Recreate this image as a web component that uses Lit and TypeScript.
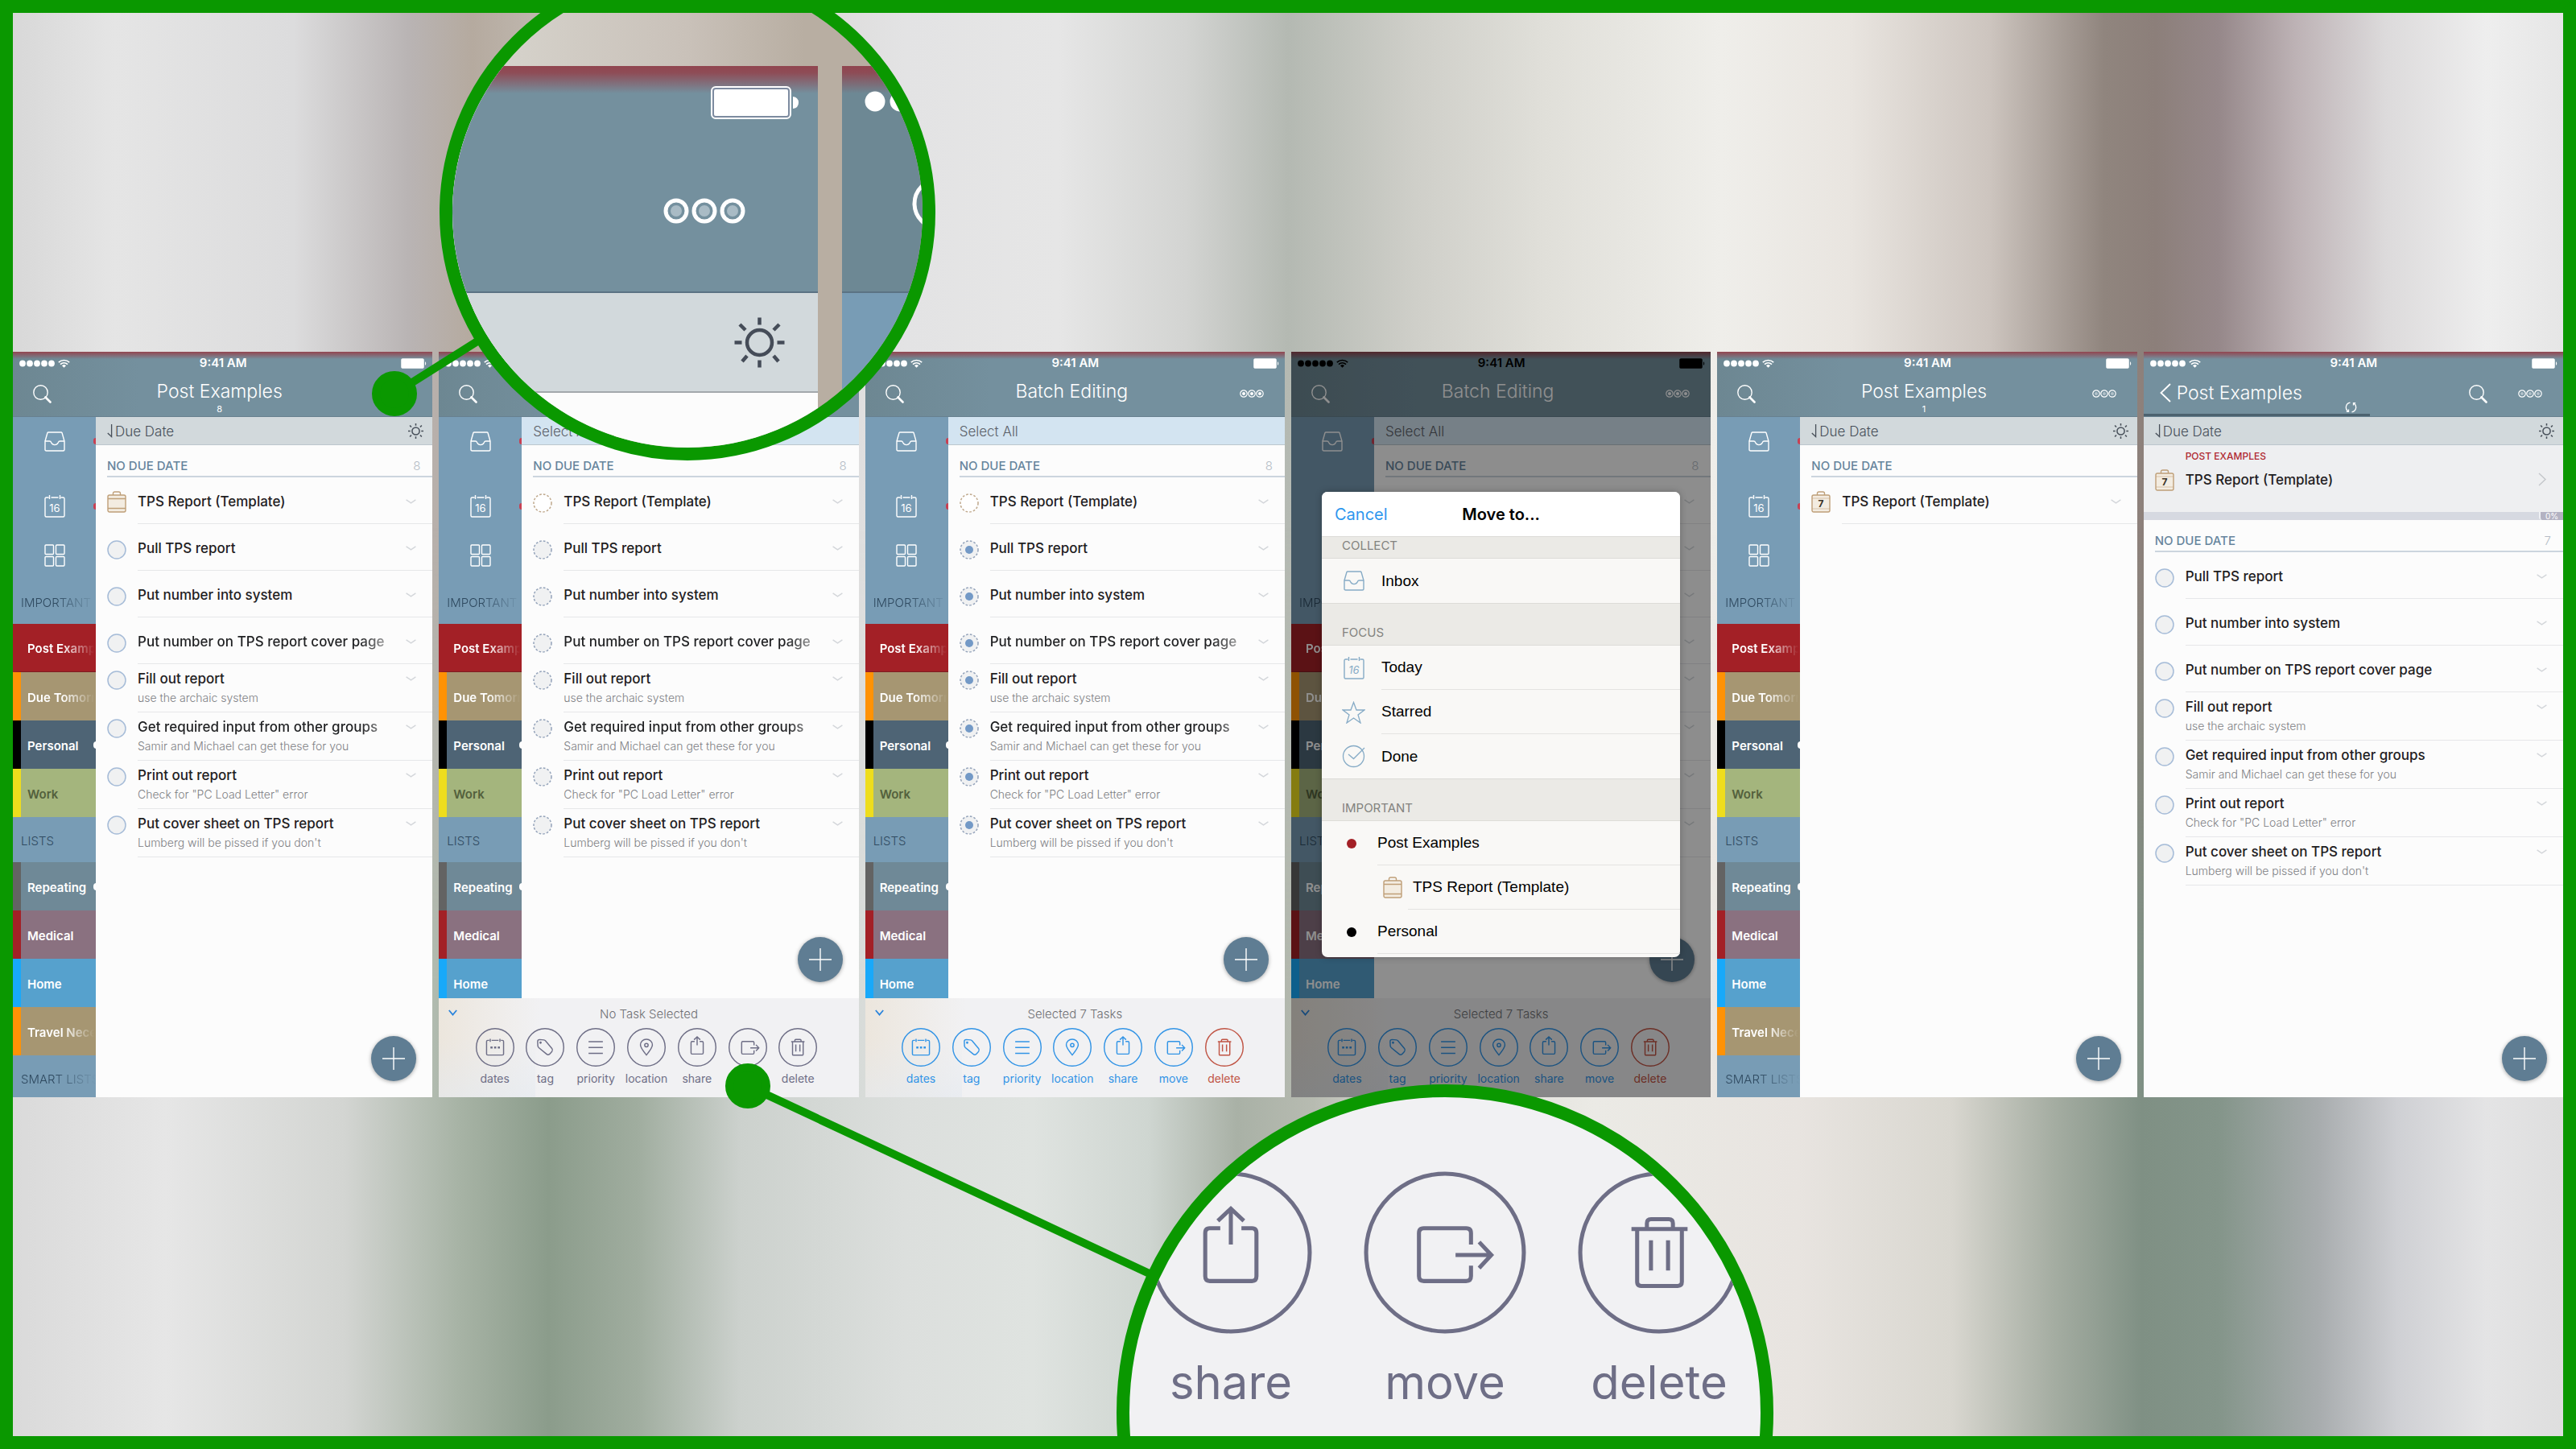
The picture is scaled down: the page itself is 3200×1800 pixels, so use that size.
import { LitElement, html, svg, css, nothing } from "lit";
import { customElement, property } from "lit/decorators.js";
import { classMap } from "lit/directives/class-map.js";

const sans = css`Inter, "Liberation Sans", sans-serif`;

/* ---------- icons ---------- */

const searchIcon = html`<svg class="ico" width="23" height="23" viewBox="0 0 23 23" fill="none" stroke="currentColor">
  <circle cx="9.5" cy="9.5" r="8.7" stroke-width="1.4" />
  <path d="M15.5 15.5 21.5 21.5" stroke-width="2.6" stroke-linecap="round" />
</svg>`;

const wifiIcon = html`<svg width="15" height="11" viewBox="0 0 15 11" fill="none" stroke="currentColor" stroke-width="1.7">
  <path d="M.8 4.2a9.6 9.6 0 0 1 13.4 0M3 6.6a6.4 6.4 0 0 1 9 0" />
  <path d="M7.5 10.8 5 8.3a3.6 3.6 0 0 1 5 0z" fill="currentColor" stroke="none" />
</svg>`;

const batteryIcon = html`<svg width="32" height="13" viewBox="0 0 32 13">
  <rect x=".5" y=".5" width="28" height="12" rx="1.6" fill="currentColor" stroke="currentColor" stroke-opacity=".5" />
  <path d="M30 4.2c1.6.6 1.6 4 0 4.6z" fill="currentColor" />
</svg>`;

const moreIcon = (on: boolean) => html`<svg class="ico" width="30" height="12" viewBox="0 0 30 12" fill="none" stroke="currentColor">
  ${[5, 15, 25].map(
    (x) => svg`<circle cx=${x} cy="6" r="4.2" stroke-width="1.2" />
      <circle cx=${x} cy="6" r="2" fill="currentColor" fill-opacity=${on ? 1 : 0.45} stroke="none" />`
  )}
</svg>`;

const sunIcon = html`<svg width="19" height="19" viewBox="0 0 62 62" fill="none" stroke="currentColor" stroke-width="5">
  <circle cx="31" cy="31" r="15" />
  <path d="M31 0v9M31 53v9M0 31h9M53 31h9M7 8l6 7M49 47l6 7M55 8l-6 7M13 47l-6 7" />
</svg>`;

const sortArrow = html`<svg width="7" height="17" viewBox="0 0 7 17" fill="none" stroke="currentColor" stroke-width="1.3">
  <path d="M5.6 0v15.5L.8 11" />
</svg>`;

const inboxIcon = html`<svg width="26" height="25" viewBox="0 0 26 25" fill="none" stroke="currentColor" stroke-width="1.4">
  <path d="M1 12 4 1.6Q4.300 1 5 1H21Q21.700 1 22 1.600L25 12V22.500Q25 24 23.500 24H2.500Q1 24 1 22.500ZM1 12H6.500Q8 12 8.700 13.800Q10 16.600 13 16.600T17.300 13.800Q18 12 19.500 12H25" />
</svg>`;

const calendarIcon = html`<svg width="26" height="28" viewBox="0 0 26 28" fill="none" stroke="currentColor" stroke-width="1.400">
  <path d="M5.500 3H2.500Q1 3 1 4.500V25.500Q1 27 2.500 27H23.500Q25 27 25 25.500V4.500Q25 3 23.500 3H20.500M8.500 3H17.500M6.500 0V5M19.500 0V5" />
  <text x="13" y="20.500" text-anchor="middle" font-size="13" fill="currentColor" stroke="none" font-family="Inter, sans-serif">16</text>
</svg>`;

const gridIcon = html`<svg width="26" height="28" viewBox="0 0 26 28" fill="none" stroke="currentColor" stroke-width="1.400">
  <rect x="1" y="1" width="10.500" height="11.500" rx="1" /><rect x="14.500" y="1" width="10.500" height="11.500" rx="1" />
  <rect x="1" y="15.500" width="10.500" height="11.500" rx="1" /><rect x="14.500" y="15.500" width="10.500" height="11.500" rx="1" />
</svg>`;

const starIcon = html`<svg width="29" height="28" viewBox="0 0 29 28" fill="none" stroke="currentColor" stroke-width="1.300">
  <path d="M14.500 1.500 18 11H27.800L20 17 23 27 14.500 21 6 27 9 17 1.200 11H11Z" />
</svg>`;

const doneIcon = html`<svg width="29" height="29" viewBox="0 0 29 29" fill="none" stroke="currentColor" stroke-width="1.300">
  <circle cx="14.500" cy="14.500" r="13" /><path d="M8 12 14.500 17.500 28 4" />
</svg>`;

const briefcase = (count?: number) => html`<svg width="24" height="27" viewBox="0 0 24 27" fill="none" stroke="#bf9f78" stroke-width="1.400">
  <path d="M7.500 5V3Q7.500 1 9.500 1H14.500Q16.500 1 16.500 3V5" />
  <rect x="1" y="5" width="22" height="21" rx="2" fill="#f3ece1" />
  ${count === undefined
    ? svg`<path d="M1 9.500H23M1 21.500H23" />`
    : svg`<path d="M1 9H23M1 22H23" stroke-opacity=".35" />
      <text x="12" y="19.500" text-anchor="middle" font-size="12" font-weight="700" fill="#3a3428" stroke="none" font-family="Inter, sans-serif">${count}</text>`}
</svg>`;

const downChevron = html`<svg width="13" height="6" viewBox="0 0 13 6" fill="none" stroke="currentColor" stroke-width="1.400">
  <path d="M.6.8 6.500 4.800 12.400.8" />
</svg>`;

const gear = html`<svg width="12" height="14" viewBox="0 0 12 14" fill="none" stroke="#a5620d">
  <circle cx="5" cy="7" r="3.600" stroke-width="2" />
  <path d="M5 1v12M0 7h11M1 3l8 8M1 11l8-8" stroke-width="1.500" stroke-dasharray="2 20" />
  <path d="M9 7h2M8 3.500l1.500-1M8 10.500l1.500 1" stroke-width="2" />
</svg>`;

/* Tool glyphs, drawn on a 200-unit circle. */
const toolGlyphs: Record<string, unknown> = {
  dates: svg`<path d="M70 64H62Q56 64 56 70V134Q56 140 62 140H138Q144 140 144 134V70Q144 64 138 64H130M82 64H118M75 56V72M125 56V72" />
    <path d="M76 101h11M95 101h11M114 101h11" stroke-width="10" />`,
  tag: svg`<path d="M62 70Q62 60 72 60L95 62Q99 63 102 66L136 106Q142 114 136 122L124 135Q116 142 108 135L68 102Q64 98 63 93Z" />
    <circle cx="77" cy="76" r="3" />`,
  priority: svg`<path d="M63 71H137M63 101H137M63 131H137" />`,
  location: svg`<path d="M100 140Q69 103 69 88A31 30 0 0 1 131 88Q131 103 100 140Z" /><circle cx="100" cy="89" r="9" />`,
  share: svg`<path d="M87 70H74Q68.500 70 68.500 76V129Q68.500 135 74 135H126Q131.500 135 131.500 129V76Q131.500 70 126 70H113M100 46V90M84 61 100 46 116 61" />`,
  move: svg`<path d="M132 90V76Q132 70 126 70H74Q68 70 68 76V129Q68 135 74 135H126Q132 135 132 129V116M113 103H157M142 87 157 103 142 119" />`,
  delete: svg`<path d="M66 71H135M73 71V136Q73 141 78 141H123Q128 141 128 136V71M85 71V64Q85 59 90 59H112Q117 59 117 64V71M90 85V122M111 85V122" />`,
};

const toolDisc = (name: string, size: number) => html`<svg width=${size} height=${size} viewBox="0 0 200 200" fill="none" stroke="currentColor" stroke-width=${size > 100 ? 5 : 6}>
  <circle cx="100" cy="100" r="97" />${toolGlyphs[name]}
</svg>`;

/* ---------- data ---------- */

interface Task {
  title: string;
  note?: string;
}

const tasks: Task[] = [
  { title: "Pull TPS report" },
  { title: "Put number into system" },
  { title: "Put number on TPS report cover page" },
  { title: "Fill out report", note: "use the archaic system" },
  { title: "Get required input from other groups", note: "Samir and Michael can get these for you" },
  { title: "Print out report", note: 'Check for "PC Load Letter" error' },
  { title: "Put cover sheet on TPS report", note: "Lumberg will be pissed if you don't" },
];

const important = [
  { name: "Post Examples", tone: "current" },
  { name: "Due Tomorrow", tone: "tan", gear: true },
  { name: "Personal", tone: "navy", dot: true },
  { name: "Work", tone: "green" },
];

const lists = [
  { name: "Repeating", tone: "grey", dot: true },
  { name: "Medical", tone: "wine" },
  { name: "Home", tone: "sky" },
  { name: "Travel Necessities", tone: "tan" },
];

const tools = ["dates", "tag", "priority", "location", "share", "move", "delete"];

/* ---------- shared styles ---------- */

const base = css`
  :host {
    font-family: ${sans};
  }
  * {
    box-sizing: border-box;
  }
  svg {
    display: block;
    flex: none;
  }
  button {
    font: inherit;
    color: inherit;
    background: none;
    border: 0;
    padding: 0;
    margin: 0;
  }
  a {
    color: inherit;
    text-decoration: none;
  }
  h2,
  h3,
  p {
    margin: 0;
    font-weight: 400;
  }
`;

/* ---------- sidebar ---------- */

@customElement("list-rail")
export class ListRail extends LitElement {
  @property({ type: Boolean }) short = false;

  static styles = [
    base,
    css`
      :host {
        display: block;
        overflow: hidden;
        background: #789cb5;
        color: #fff;
      }
      .nav {
        height: 257px;
        display: flex;
        flex-direction: column;
        align-items: center;
        padding-top: 18px;
      }
      .nav a {
        width: 100%;
        display: flex;
        justify-content: center;
        position: relative;
      }
      .nav .inbox {
        height: 79px;
      }
      .nav .today {
        height: 61px;
      }
      .badge::after {
        content: "";
        position: absolute;
        right: -3px;
        top: 8px;
        width: 6px;
        height: 8px;
        border-radius: 3px;
        background: #c84052;
      }
      .nav .today::after {
        top: 10px;
      }
      .nav p {
        margin-top: auto;
      }
      .label {
        width: 100%;
        height: 56px;
        padding: 0 10px;
        line-height: 60px;
        font-size: 15px;
        font-weight: 300;
        color: #2f4a60;
        overflow: hidden;
        white-space: nowrap;
        mask-image: linear-gradient(90deg, #000 50%, transparent 100%);
      }
      .label.short {
        mask-image: none;
      }
      .label.last {
        height: 52px;
      }
      .nav .label {
        height: 52px;
        line-height: 52px;
      }
      .item {
        display: flex;
        align-items: center;
        height: 60px;
        border-left: 10px solid;
        padding-left: 8px;
        font-size: 15px;
        font-weight: 600;
        white-space: nowrap;
        overflow: hidden;
        position: relative;
      }
      .item span {
        flex: 1;
        overflow: hidden;
        padding-top: 2px;
      }
      .fade {
        mask-image: linear-gradient(90deg, #000 50%, transparent 98%);
      }
      .gear {
        position: absolute;
        left: -12px;
        top: 24px;
      }
      .dot::after {
        content: "";
        position: absolute;
        right: -5px;
        top: 26px;
        width: 8px;
        height: 9px;
        border-radius: 4px;
        background: #fff;
      }
      .current {
        background: #a32026;
        border-color: #a32026;
        border-bottom: 1px solid #7d1c20;
      }
      .tan {
        background: #a69672;
        border-left-color: #ff9205;
      }
      .navy {
        background: #4e6475;
        border-left-color: #000;
      }
      .green {
        background: #a4b57d;
        border-left-color: #eedd1d;
        color: #53603c;
      }
      .grey {
        background: #6f8997;
        border-left-color: #636363;
      }
      .wine {
        background: #8a7180;
        border-left-color: #a32026;
      }
      .sky {
        background: #56a1cd;
        border-left-color: #18a9fa;
      }
    `,
  ];

  private item = (i: { name: string; tone: string; gear?: boolean; dot?: boolean }) => html`
    <a href="#list" class=${classMap({ item: true, [i.tone]: true, dot: !!i.dot })}>
      ${i.gear ? html`<i class="gear">${gear}</i>` : nothing}
      <span class=${classMap({ fade: i.name.length > 10 })}>${i.name}</span>
    </a>
  `;

  render() {
    return html`
      <div class="nav">
        <a class="inbox badge" href="#inbox" aria-label="Inbox">${inboxIcon}</a>
        <a class="today badge" href="#today" aria-label="Today">${calendarIcon}</a>
        <a href="#all" aria-label="All lists">${gridIcon}</a>
        <p class="label">IMPORTANT</p>
      </div>
      ${important.map(this.item)}
      <p class="label short">LISTS</p>
      ${(this.short ? lists.slice(0, 3) : lists).map(this.item)}
      ${this.short ? nothing : html`<p class="label last">SMART LISTS</p>`}
    `;
  }
}

/* ---------- batch toolbar ---------- */

@customElement("batch-toolbar")
export class BatchToolbar extends LitElement {
  @property() heading = "";
  @property({ type: Boolean }) active = false;

  static styles = [
    base,
    css`
      :host {
        display: block;
        height: 123px;
        padding-top: 9px;
        background: linear-gradient(180deg, #f1f1f300 40%, #e3e9f088 100%) 0 0 / 120px 100% no-repeat,
          linear-gradient(90deg, #ece6dd, #f1f1f3 24%);
        color: #6e6e86;
        position: relative;
      }
      .fold {
        position: absolute;
        left: 12px;
        top: 14px;
        color: #2a84dc;
      }
      .heading {
        text-align: center;
        font-size: 15px;
        line-height: 22px;
        font-weight: 300;
        color: #6f7074;
      }
      .tools {
        display: grid;
        grid-template-columns: repeat(7, 1fr);
        padding: 6px 44px 0 38px;
      }
      .tool {
        display: flex;
        flex-direction: column;
        align-items: center;
        gap: 6px;
        font-size: 14px;
        line-height: 18px;
      }
      .active .tool {
        color: #3294e6;
      }
      .active .delete {
        color: #c05444;
      }
    `,
  ];

  render() {
    return html`
      <button class="fold" aria-label="Hide tools">
        <svg width="11" height="8" viewBox="0 0 11 8" fill="none" stroke="currentColor" stroke-width="1.800"><path d="M.8 1 5.500 6.500 10.200 1" /></svg>
      </button>
      <p class="heading">${this.heading}</p>
      <div class=${classMap({ tools: true, active: this.active })}>
        ${tools.map((t) => html`<button class="tool ${t}">${toolDisc(t, 48)}<span>${t}</span></button>`)}
      </div>
    `;
  }
}

/* ---------- move dialog ---------- */

@customElement("move-dialog")
export class MoveDialog extends LitElement {
  static styles = [
    base,
    css`
      :host {
        display: block;
        height: 578px;
        border-radius: 7px;
        overflow: hidden;
        background: #f9f8f6;
        box-shadow: 0 0 8px rgba(0, 0, 0, 0.25);
      }
      .head {
        display: grid;
        grid-template-columns: 1fr auto 1fr;
        align-items: center;
        height: 55px;
        padding: 0 16px;
        background: #fff;
        font-size: 20px;
      }
      .cancel {
        justify-self: start;
        color: #2c96ee;
      }
      .head h2 {
        font-size: 20px;
        font-weight: 600;
        color: #000;
      }
      .group {
        height: 53px;
        display: flex;
        align-items: flex-end;
        padding: 0 25px 6px;
        font-size: 15px;
        line-height: 18px;
        color: #83837f;
        background: #ebeae6;
        border: solid #dddcd8;
        border-width: 1px 0;
      }
      .group.first {
        height: 28px;
      }
      .row {
        display: flex;
        width: 100%;
        height: 55px;
        align-items: stretch;
        text-align: left;
        font: 19px "Liberation Sans", sans-serif;
        color: #000;
      }
      .mark {
        width: 74px;
        display: flex;
        align-items: center;
        justify-content: center;
        padding-left: 6px;
        color: #86abc6;
      }
      .row span {
        flex: 1;
        display: flex;
        align-items: center;
        border-bottom: 1px solid #e4e3e1;
      }
      .row.end span {
        border: 0;
      }
      .dotted .mark {
        width: 69px;
      }
      .dot {
        width: 12px;
        height: 12px;
        border-radius: 50%;
        background: currentColor;
      }
      .red {
        color: #a32026;
      }
      .black {
        color: #000;
      }
      .nested .mark {
        width: 107px;
        justify-content: flex-end;
        padding-right: 7px;
      }
      .nested span {
        padding-left: 6px;
      }
    `,
  ];

  render() {
    return html`
      <div class="head">
        <button class="cancel">Cancel</button>
        <h2>Move to...</h2>
      </div>
      <h3 class="group first">COLLECT</h3>
      <button class="row end"><i class="mark">${inboxIcon}</i><span>Inbox</span></button>
      <h3 class="group">FOCUS</h3>
      <button class="row"><i class="mark">${calendarIcon}</i><span>Today</span></button>
      <button class="row"><i class="mark">${starIcon}</i><span>Starred</span></button>
      <button class="row end"><i class="mark">${doneIcon}</i><span>Done</span></button>
      <h3 class="group">IMPORTANT</h3>
      <button class="row dotted"><i class="mark"><b class="dot red"></b></i><span>Post Examples</span></button>
      <button class="row nested"><i class="mark">${briefcase()}</i><span>TPS Report (Template)</span></button>
      <button class="row dotted"><i class="mark"><b class="dot black"></b></i><span>Personal</span></button>
    `;
  }
}

/* ---------- phone screen ---------- */

type Mode = "list" | "batch" | "selected" | "moving" | "single" | "detail";

@customElement("phone-screen")
export class PhoneScreen extends LitElement {
  @property() mode: Mode = "list";

  static styles = [
    base,
    css`
      :host {
        display: flex;
        flex-direction: column;
        min-width: 0;
        position: relative;
        background: #fcfcfc;
        color: #1f2022;
      }
      .header {
        height: 81px;
        flex: none;
        color: #fff;
        background: linear-gradient(180deg, #93454f, #93454f00 9px), linear-gradient(90deg, #6d8792, #74909e 30%);
        border-bottom: 1px solid #67808f;
      }
      .detail .header {
        background: linear-gradient(180deg, #93454f, #93454f00 9px), #74909e;
      }
      .status {
        height: 28px;
        display: grid;
        grid-template-columns: 1fr auto 1fr;
        align-items: center;
        padding: 0 7px 0 8px;
        font-size: 15px;
        line-height: 28px;
        font-weight: 600;
        position: relative;
      }
      .moving .status {
        z-index: 3;
        color: #000;
      }
      .signal {
        display: flex;
        align-items: center;
        gap: 3px;
      }
      .battery {
        justify-self: end;
      }
      .bar {
        display: flex;
        align-items: flex-start;
        justify-content: space-between;
        padding: 7px 26px 0 25px;
      }
      .bar button {
        display: flex;
        align-items: center;
        height: 24px;
        margin-top: 5px;
      }
      .heading {
        flex: 1;
        text-align: center;
      }
      .heading h2 {
        font-size: 23px;
        line-height: 28px;
        font-weight: 300;
      }
      .heading p {
        font-size: 11px;
        line-height: 16px;
      }
      .wide {
        display: grid;
        grid-template-columns: 1fr auto 1fr;
        padding: 9px 26px 0 20px;
        height: 52px;
        background: linear-gradient(#4c626f, #4c626f) 0 100% / 54% 3px no-repeat;
      }
      .wide .back {
        gap: 7px;
        height: 28px;
        margin: 0;
        font-size: 23px;
        font-weight: 300;
      }
      .wide .sync {
        margin-top: 25px;
        height: 14px;
      }
      .wide .actions {
        display: flex;
        justify-content: flex-end;
        gap: 38px;
      }
      .wide .actions button {
        margin-top: 3px;
      }
      .body {
        display: flex;
        align-items: stretch;
      }
      .detail .body {
        flex: 1;
      }
      .batched .body {
        flex: 1 1 0;
        min-height: 0;
        overflow: hidden;
      }
      .screen {
        flex: 1;
        display: flex;
        flex-direction: column;
      }
      list-rail {
        width: 103px;
        flex: none;
      }
      .detail list-rail {
        display: none;
      }
      .pane {
        flex: 1;
        min-width: 0;
        position: relative;
      }
      .sort {
        display: flex;
        align-items: center;
        justify-content: space-between;
        height: 35px;
        padding: 1px 11px 0 14px;
        background: #d2d9dc;
        border-bottom: 1px solid #bcc6cd;
        color: #474f59;
        font-size: 17px;
        font-weight: 300;
      }
      .sort button {
        display: flex;
        align-items: center;
        gap: 3px;
      }
      .batched .sort {
        background: #d3e4f1;
        color: #5b6068;
      }
      .section {
        display: flex;
        justify-content: space-between;
        align-items: flex-end;
        height: 40px;
        margin-left: 14px;
        padding: 0 15px 2px 0;
        font-size: 15px;
        line-height: 20px;
        font-weight: 500;
        color: #67859d;
        border-bottom: 2px solid #ccd5de;
      }
      .section small {
        font-size: 15px;
        font-weight: 300;
        color: #b5bcc6;
      }
      .row {
        display: flex;
        height: 58px;
        padding-left: 14px;
      }
      .tick {
        display: grid;
        width: 24px;
        height: 24px;
        margin-top: 20px;
      }
      .tick > * {
        grid-area: 1 / 1;
        width: 24px;
        height: 24px;
        margin: 0;
      }
      .tick input {
        appearance: none;
        opacity: 0;
      }
      .case {
        width: 24px;
        margin-top: 17px;
      }
      .cell {
        flex: 1;
        min-width: 0;
        margin-left: 14px;
        padding: 18px 20px 0 0;
        display: flex;
        align-items: flex-start;
        border-bottom: 1px solid #e6e7e9;
      }
      .text {
        flex: 1;
        min-width: 0;
        overflow: hidden;
        white-space: nowrap;
      }
      .title {
        display: block;
        font-size: 17px;
        line-height: 24px;
        font-weight: 500;
      }
      .clip .title {
        mask-image: linear-gradient(90deg, #000 86%, #0005 98%);
      }
      .note {
        display: block;
        font-size: 14px;
        line-height: 24px;
        font-weight: 300;
        color: #7e8084;
      }
      .more {
        height: 20px;
        margin-left: 12px;
        display: flex;
        align-items: center;
        color: #d3d6da;
        padding-top: 3px;
      }
      .noted {
        height: 60px;
      }
      .noted .tick {
        margin-top: 8px;
      }
      .noted .cell {
        padding-top: 6px;
      }
      .project {
        display: flex;
        height: 83px;
        padding: 7px 21px 0 14px;
        background: #eeeff1;
      }
      .project .case {
        margin-top: 23px;
      }
      .project .text {
        margin-left: 14px;
      }
      .owner {
        font-size: 12px;
        line-height: 14px;
        font-weight: 500;
        color: #b02a32;
      }
      .project .title {
        margin-top: 10px;
      }
      .project .next {
        color: #c3c6ca;
        margin-top: 27px;
        height: 17px;
      }
      .progress {
        display: flex;
        justify-content: flex-end;
        height: 10px;
        background: #d6d9e1;
      }
      .progress span {
        width: 30px;
        background: #b3b2c2;
        border-left: 2px solid #eef0f4;
        border-radius: 0 0 0 4px;
        color: #fff;
        font-size: 10px;
        line-height: 10px;
        text-align: center;
      }
      .add {
        position: absolute;
        right: 20px;
        bottom: 20px;
        width: 56px;
        height: 56px;
        border-radius: 50%;
        background: #5f7d93;
        color: #fff;
        display: grid;
        place-items: center;
        box-shadow: 0 1px 5px rgba(0, 0, 0, 0.35);
      }
      batch-toolbar {
        flex: none;
      }
      .shade {
        position: absolute;
        inset: 0;
        z-index: 2;
        background: rgba(0, 0, 0, 0.44);
        padding: 174px 38px 0;
      }
    `,
  ];

  private get batched() {
    return this.mode === "batch" || this.mode === "selected" || this.mode === "moving";
  }

  private tick(id: string, stroke: string, checked: boolean) {
    const dashed = this.batched;
    return html`<span class="tick">
      <input type="checkbox" id=${id} .checked=${checked} />
      <svg viewBox="0 0 24 24">
        <circle cx="12" cy="12" r="11" fill=${id === "t0" ? "#fff" : "#f0f1f2"} stroke=${stroke} stroke-width="1.500" stroke-dasharray=${dashed ? "2.660 2.100" : "none"} />
        ${checked ? svg`<circle cx="12" cy="12" r="5" fill="#7399c6" />` : nothing}
      </svg>
    </span>`;
  }

  private row(t: Task, index: number, mark: unknown) {
    const cls = { row: true, noted: !!t.note, clip: t.title.length > 34 && this.mode !== "detail" };
    return html`<div class=${classMap(cls)}>
      ${mark}
      <div class="cell">
        <div class="text">
          <label class="title" for="t${index}">${t.title}</label>
          ${t.note ? html`<span class="note">${t.note}</span>` : nothing}
        </div>
        <button class="more" aria-label="Task options">${downChevron}</button>
      </div>
    </div>`;
  }

  private header() {
    const status = html`<div class="status">
      <div class="signal">
        <svg width="45" height="9" viewBox="0 0 45 9" fill="currentColor">
          ${[4, 13, 22, 31, 40].map((x) => svg`<circle cx=${x} cy="4.500" r="3.900" />`)}
        </svg>
        ${wifiIcon}
      </div>
      <span>9:41 AM</span>
      <div class="battery">${batteryIcon}</div>
    </div>`;
    if (this.mode === "detail") {
      return html`<div class="header">
        ${status}
        <div class="bar wide">
          <button class="back">
            <svg width="14" height="24" viewBox="0 0 14 24" fill="none" stroke="currentColor" stroke-width="1.800"><path d="M13 1 1.500 12 13 23" /></svg>
            Post Examples
          </button>
          <button class="sync" aria-label="Sync">
            <svg width="15" height="14" viewBox="0 0 15 14" fill="none" stroke="currentColor" stroke-width="1.300">
              <path d="M6.500 1.100A6 6 0 0 0 4 12M8.500 12.900A6 6 0 0 0 11 2M4.500 9.500V12.300H1.800M10.500 4.500V1.700H13.200" />
            </svg>
          </button>
          <div class="actions">
            <button aria-label="Search">${searchIcon}</button>
            <button aria-label="More">${moreIcon(false)}</button>
          </div>
        </div>
      </div>`;
    }
    return html`<div class="header">
      ${status}
      <div class="bar">
        <button aria-label="Search">${searchIcon}</button>
        <div class="heading">
          <h2>${this.batched ? "Batch Editing" : "Post Examples"}</h2>
          ${this.batched ? nothing : html`<p>${this.mode === "list" ? 8 : 1}</p>`}
        </div>
        <button aria-label="More">${moreIcon(this.batched)}</button>
      </div>
    </div>`;
  }

  render() {
    const m = this.mode;
    const checked = m === "selected" || m === "moving";
    const count = m === "single" ? "" : m === "detail" ? "7" : "8";
    const template: Task = { title: "TPS Report (Template)" };
    const templateMark = this.batched
      ? this.tick("t0", "#bfa88c", false)
      : html`<span class="case">${briefcase(m === "single" ? 7 : undefined)}</span>`;
    return html`<div class=${classMap({ screen: true, batched: this.batched, moving: m === "moving", detail: m === "detail" })}>
      ${this.header()}
      <div class="body">
        ${m === "detail" ? nothing : html`<list-rail ?short=${this.batched}></list-rail>`}
        <div class="pane">
          <div class="sort">
            ${this.batched
              ? html`<button>Select All</button>`
              : html`<button>${sortArrow}Due Date</button><button aria-label="Focus">${sunIcon}</button>`}
          </div>
          ${m === "detail"
            ? html`<div class="project">
                  <span class="case">${briefcase(7)}</span>
                  <div class="text">
                    <p class="owner">POST EXAMPLES</p>
                    <span class="title">TPS Report (Template)</span>
                  </div>
                  <button class="next" aria-label="Open project">
                    <svg width="10" height="17" viewBox="0 0 10 17" fill="none" stroke="currentColor" stroke-width="1.400"><path d="M1 1 9 8.500 1 16" /></svg>
                  </button>
                </div>
                <div class="progress"><span>0%</span></div>`
            : nothing}
          <h3 class="section">NO DUE DATE <small>${count}</small></h3>
          ${m === "detail" ? nothing : this.row(template, 0, templateMark)}
          ${m === "single" ? nothing : tasks.map((t, i) => this.row(t, i + 1, this.tick(`t${i + 1}`, this.batched ? "#94a3ba" : "#a6bcd8", checked)))}
          <button class="add" aria-label="Add task">
            <svg width="28" height="28" viewBox="0 0 28 28" fill="none" stroke="currentColor" stroke-width="1.400"><path d="M14 0V28M0 14H28" /></svg>
          </button>
        </div>
      </div>
      ${this.batched
        ? html`<batch-toolbar heading=${checked ? "Selected 7 Tasks" : "No Task Selected"} ?active=${checked}></batch-toolbar>`
        : nothing}
      ${m === "moving" ? html`<div class="shade"><move-dialog></move-dialog></div>` : nothing}
    </div>`;
  }
}

/* ---------- page ---------- */

@customElement("app-root")
export class AppRoot extends LitElement {
  static styles = [
    base,
    css`
      :host {
        display: block;
      }
      .stage {
        position: relative;
        min-height: 100vh;
        display: grid;
        align-content: center;
        border: 16px solid #0a9800;
        overflow: hidden;
        background: linear-gradient(90deg, #d8d8d8 0, #e5e5e5 4%, #dcdcdd 11%, #b9b4b4 15.500%, #b5aa9f 18%, #d0cdc8 25%, #e3e3e4 35%, #e6e6e6 41%, #d3d4d2 46%, #b4b9b2 50%, #cfcfc9 55%, #e0dfd9 60%, #efeeea 67%, #e9e5e0 72%, #cdc5bf 77.500%, #90857e 82%, #8c7f7a 84%, #96888a 86.500%, #bdb2b5 89.500%, #dcdadb 93%, #eeeeee 97%, #e6e6e6 100%);
      }
      .stage::before {
        content: "";
        position: absolute;
        inset: 0;
        background: linear-gradient(90deg, #dadada 0, #e6e6e6 6%, #d3d5d2 13%, #a7b3a5 17.500%, #8b9c8b 21%, #a0ad9f 24.500%, #ccd1cd 28.500%, #dcdfdd 35%, #dfe3e0 40%, #cfd6d1 44.500%, #a9b1a6 48%, #b7bbb1 51%, #d6d5cf 54%, #ebeae5 62%, #e8e4e0 70%, #d9d7d0 76%, #a5ada2 80%, #7f9084 83.500%, #84958a 86.500%, #a9adaf 90.500%, #cfd0d4 93.500%, #e4e4e5 97%, #dedede 100%);
        mask-image: linear-gradient(180deg, transparent 36%, #000 68%);
      }
      .phones {
        position: relative;
        z-index: 0;
        display: grid;
        grid-template-columns: repeat(6, minmax(0, 1fr));
        gap: 8px;
      }
      .notes {
        position: absolute;
        z-index: 1;
        inset: -12px;
        overflow: hidden;
        pointer-events: none;
      }
      .links {
        position: absolute;
        inset: 0;
        width: 100%;
        height: 100%;
      }
      .lens {
        position: absolute;
        border: 16px solid #0a9800;
        border-radius: 50%;
        overflow: hidden;
      }
      .menu {
        left: 542px;
        top: -48px;
        width: 616px;
        height: 616px;
        background: linear-gradient(90deg, #d9d7d0, #c9c1b9 50%, #b8aea2 75%, #b8aea2);
      }
      .move {
        left: 1383px;
        bottom: -367px;
        width: 816px;
        height: 816px;
        background: #f1f1f3;
      }
      .zoomed {
        display: flex;
        justify-content: center;
        gap: 64px;
        padding-top: 92px;
        color: #6e6e86;
      }
      .zoomed figure {
        flex: none;
        width: 202px;
        margin: 0;
        display: flex;
        flex-direction: column;
        align-items: center;
      }
      .zoomed figcaption {
        margin-top: 24px;
        font-size: 58px;
        line-height: 72px;
      }
    `,
  ];

  render() {
    const modes: Mode[] = ["list", "batch", "selected", "moving", "single", "detail"];
    return html`<main class="stage">
      <div class="phones">${modes.map((m) => html`<phone-screen mode=${m}></phone-screen>`)}</div>
      <div class="notes">
        <svg class="links" fill="#0a9800" stroke="#0a9800" stroke-width="10">
          <path d="M486 485 600 413M925 1345 1430 1581" />
          <circle cx="486" cy="485" r="23" /><circle cx="925" cy="1345" r="23" />
        </svg>
        <div class="lens menu">
          <svg width="584" height="584" viewBox="562 -28 584 584">
            <defs>
              <linearGradient id="glow" x2="0" y2="1">
                <stop stop-color="#91454f" /><stop offset=".25" stop-color="#91454f" stop-opacity=".9" /><stop offset="1" stop-color="#91454f" stop-opacity="0" />
              </linearGradient>
            </defs>
            <path d="M500 82H1016V560H500Z" fill="#fcfcfc" />
            <path d="M500 363H1016V487H500Z" fill="#d2d9dc" />
            <path d="M500 82H1016V363H500Z" fill="#74909e" />
            <path d="M1046 82H1200V363H1046Z" fill="#6d8894" />
            <path d="M1046 363H1200V560H1046Z" fill="#789cb5" />
            <path d="M500 82H1016V116H500ZM1046 82H1200V116H1046Z" fill="url(#glow)" />
            <path d="M500 363H1016M1046 363H1200" stroke="#5b7384" stroke-width="2" />
            <path d="M500 487H1016" stroke="#a3a8ac" stroke-width="2" />
            <rect x="884" y="108" width="98" height="39" rx="5" fill="#7d8ba0" stroke="#fff" stroke-width="2" />
            <rect x="887" y="111" width="92" height="33" rx="2" fill="#fff" />
            <path d="M985 120q7 1 7 7.500T985 135z" fill="#fff" />
            <g fill="none" stroke="#fff" stroke-width="5">
              <circle cx="840" cy="262" r="13" /><circle cx="875" cy="262" r="13" /><circle cx="910" cy="262" r="13" />
              <circle cx="1166" cy="253" r="30" />
            </g>
            <g fill="#a9bbc5"><circle cx="840" cy="262" r="7" /><circle cx="875" cy="262" r="7" /><circle cx="910" cy="262" r="7" /></g>
            <g fill="#fff"><circle cx="1087" cy="126" r="12.500" /><circle cx="1118" cy="126" r="12.500" /></g>
            <g fill="none" stroke="#454c58" stroke-width="4.500">
              <circle cx="943.500" cy="425.500" r="15.500" />
              <path d="M943.500 394.500v9M943.500 447.500v9M912.500 425.500h9M965.500 425.500h9M919 403l7 7M961 442l6 7M968 403l-7 7M928 442l-6 7" />
            </g>
          </svg>
        </div>
        <div class="lens move">
          <div class="zoomed">
            ${["share", "move", "delete"].map((t) => html`<figure>${toolDisc(t, 202)}<figcaption>${t}</figcaption></figure>`)}
          </div>
        </div>
      </div>
    </main>`;
  }
}
